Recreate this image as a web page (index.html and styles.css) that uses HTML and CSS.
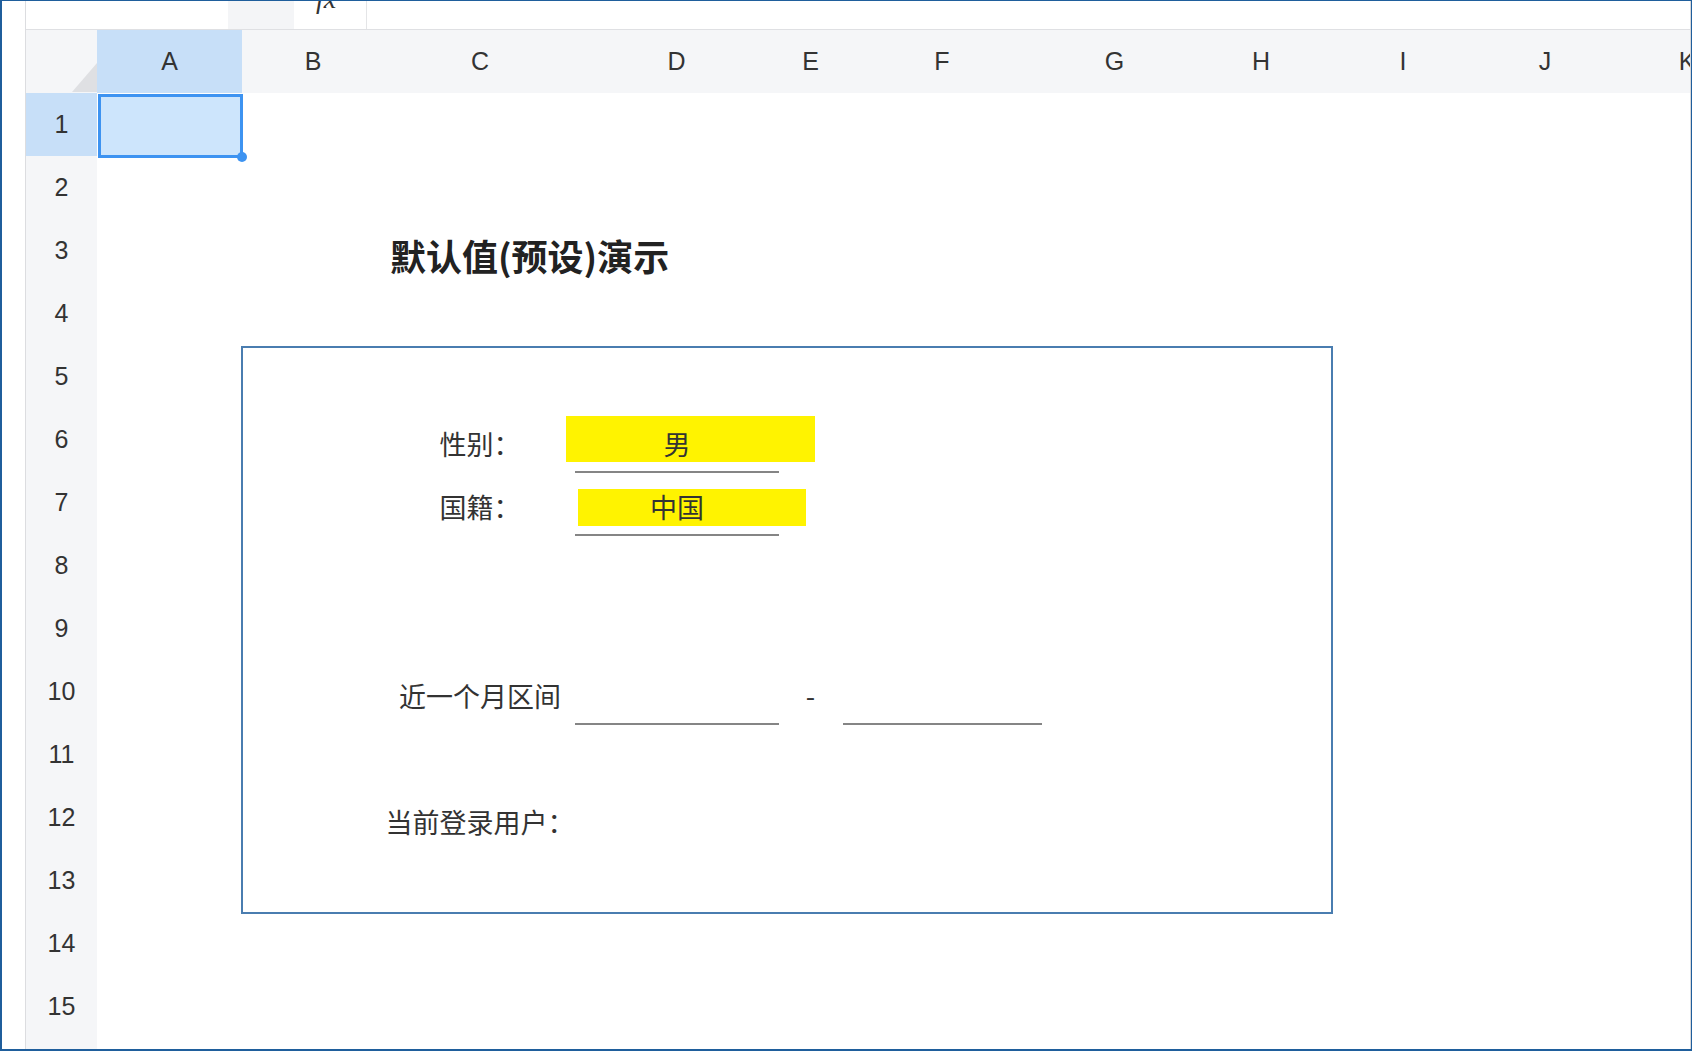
FILE: index.html
```html
<!DOCTYPE html>
<html>
<head>
    <meta charset="UTF-8">
    <title>默认值(预设)演示</title>
    <link rel="stylesheet" href="styles.css">
</head>
<body>
    <div class="window">
        <!-- Left gutter strip -->
        <div class="gutter"></div>

        <div class="sheet">
            <!-- Formula bar (scrolled, only the bottom edge shows) -->
            <div class="formula-bar">
                <div class="name-box"><span>A1</span></div>
                <div class="name-drop"></div>
                <div class="fx-box"><span>fx</span></div>
                <div class="formula-input"></div>
            </div>

            <!-- Sheet grid -->
            <div class="grid">
                <!-- Cell content, placed first so headers auto-flow around it -->
                <div class="selection"></div>

                <div class="cell title">默认值(预设)演示</div>

                <div class="form-box"></div>

                <div class="highlight hl-gender"></div>
                <div class="cell label r6">性别：</div>
                <div class="cell field r6">男</div>

                <div class="highlight hl-nation"></div>
                <div class="cell label r7">国籍：</div>
                <div class="cell field r7">中国</div>

                <div class="cell label r10">近一个月区间</div>
                <div class="cell field r10"></div>
                <div class="cell dash r10">-</div>
                <div class="cell field field-end r10"></div>

                <div class="cell label r12">当前登录用户：</div>

                <!-- Column headers -->
                <div class="corner"></div>
                <div class="col-head selected">A</div>
                <div class="col-head">B</div>
                <div class="col-head">C</div>
                <div class="col-head">D</div>
                <div class="col-head">E</div>
                <div class="col-head">F</div>
                <div class="col-head">G</div>
                <div class="col-head">H</div>
                <div class="col-head">I</div>
                <div class="col-head">J</div>
                <div class="col-head">K</div>

                <!-- Row headers -->
                <div class="row-head selected">1</div>
                <div class="row-head">2</div>
                <div class="row-head">3</div>
                <div class="row-head">4</div>
                <div class="row-head">5</div>
                <div class="row-head">6</div>
                <div class="row-head">7</div>
                <div class="row-head">8</div>
                <div class="row-head">9</div>
                <div class="row-head">10</div>
                <div class="row-head">11</div>
                <div class="row-head">12</div>
                <div class="row-head">13</div>
                <div class="row-head">14</div>
                <div class="row-head">15</div>
                <div class="row-head">16</div>
            </div>
        </div>
    </div>
</body>
</html>
```

FILE: styles.css
```css
/* General */
body {
    margin: 0;
    font-family: 'Liberation Sans', 'Noto Sans CJK SC', sans-serif;
    color: #333;
    background: #fff;
}

.window {
    display: flex;
    height: 1051px;
    box-sizing: border-box;
    border: 2px solid #1f5e9c;
    border-top-width: 1px;
    border-right-width: 1px;
    overflow: hidden;
}

.gutter {
    flex: none;
    width: 23px;
    border-right: 1px solid #dcdde0;
}

.sheet {
    flex: 1;
    min-width: 0;
    display: flex;
    flex-direction: column;
    overflow: hidden;
    border-right: 1px solid #d6d7da;
}

/* Formula bar */
.formula-bar {
    flex: none;
    display: flex;
    height: 28px;
    border-bottom: 1px solid #dfe0e3;
    overflow: hidden;
}

.name-box {
    width: 202px;
}

.name-box span {
    display: block;
    margin-top: -22px;
    padding-left: 27px;
    font-size: 24px;
    line-height: 28px;
    color: #333;
}

.name-drop {
    width: 66px;
    background: #f4f5f7;
}

.fx-box {
    width: 72px;
    border-right: 1px solid #e4e5e7;
}

.fx-box span {
    display: block;
    margin-top: -16px;
    padding-left: 22px;
    font-family: 'Liberation Serif', serif;
    font-style: italic;
    font-size: 28px;
    line-height: 28px;
    color: #333;
}

.formula-input {
    flex: 1;
}

/* Grid */
.grid {
    display: grid;
    grid-template-columns: 71px 145px 142px 192px 201px 67px 196px 149px 144px 140px 144px 140px;
    grid-template-rows: repeat(17, 63px);
}

.corner,
.col-head,
.row-head {
    background: #f5f6f8;
}

.corner {
    position: relative;
}

.corner::after {
    content: '';
    position: absolute;
    right: 0;
    bottom: 1px;
    border-left: 25px solid transparent;
    border-bottom: 29px solid #dfe0e3;
}

.col-head,
.row-head {
    display: flex;
    align-items: center;
    justify-content: center;
    font-size: 25px;
    color: #333;
}

.row-head {
    grid-column: 1;
}

.col-head.selected,
.row-head.selected {
    background: #c7dff8;
}

/* Active cell */
.selection {
    grid-row: 2;
    grid-column: 2;
    margin: 1px -1px -2px 1px;
    border: 3px solid #3d93f1;
    background: #cde5fc;
    position: relative;
}

.selection::after {
    content: '';
    position: absolute;
    right: -7px;
    bottom: -7px;
    width: 10px;
    height: 10px;
    border-radius: 50%;
    background: #3d93f1;
}

/* Cell content */
.cell {
    display: flex;
    align-items: center;
    justify-content: center;
    padding-top: 8px;
    box-sizing: border-box;
    font-family: 'Noto Sans CJK SC', 'Liberation Sans', sans-serif;
    font-size: 27px;
    color: #333;
    white-space: nowrap;
    min-width: 0;
}

.title {
    grid-row: 4;
    grid-column: 4;
    justify-content: flex-start;
    padding-left: 6px;
    font-size: 36px;
    font-weight: 700;
    color: #222;
}

.form-box {
    grid-row: 6 / 15;
    grid-column: 3 / 10;
    margin: 1px 0 -2px -1px;
    border: 2px solid #4a7db0;
}

.r6 { grid-row: 7; }
.r7 { grid-row: 8; }
.r10 { grid-row: 11; }
.r12 { grid-row: 13; }

.label {
    grid-column: 4;
}

.field {
    grid-column: 5;
    margin: 0 -2px -2px -1px;
    border-bottom: 2px solid #858585;
}

.field-end {
    grid-column: 7;
}

.dash {
    grid-column: 6;
}

.highlight {
    grid-column: 5;
    background: #fff300;
}

.hl-gender {
    grid-row: 7;
    margin: 8px -38px 9px -10px;
}

.hl-nation {
    grid-row: 8;
    margin: 18px -29px 8px 2px;
}
```
